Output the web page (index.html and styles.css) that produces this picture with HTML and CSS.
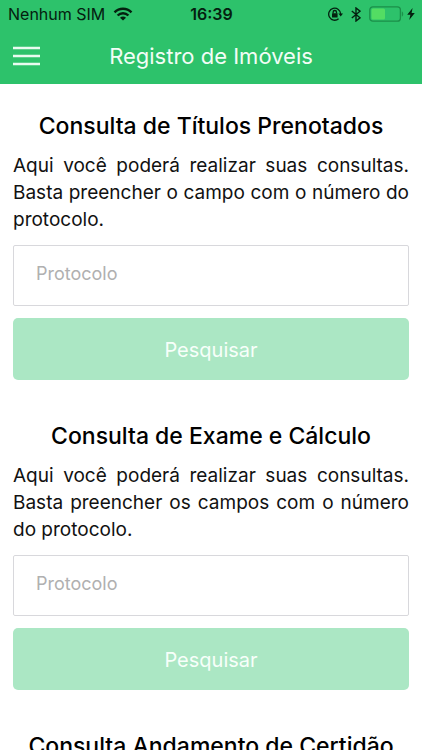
FILE: index.html
```html
<!DOCTYPE html>
<html lang="pt-BR">
<head>
  <meta charset="UTF-8">
  <meta name="viewport" content="width=device-width, initial-scale=1">
  <title>Registro de Imóveis</title>
  <link rel="stylesheet" href="styles.css">
</head>
<body>

  <header>
    <div class="status">
      <div class="carrier">
        <span>Nenhum SIM</span>
        <svg width="20" height="14" viewBox="0 0 20 14" fill="none" stroke="#04200f" stroke-width="2.4">
          <path d="M1.5 5.3C6.3 0.5 13.7 0.5 18.5 5.3"/>
          <path d="M4.6 8.5C7.6 5.5 12.4 5.5 15.4 8.5"/>
          <path d="M10 13.6L7 10.8C8.7 9.2 11.3 9.2 13 10.8Z" fill="#04200f" stroke="none"/>
        </svg>
      </div>
      <span class="clock">16:39</span>
      <div class="indicators">
        <svg width="15" height="14" viewBox="0 0 15 14" fill="none" stroke="#04200f" stroke-width="1.3">
          <path d="M10.6 11.8A6 6 0 1 1 12.7 7"/>
          <path d="M10.4 6.6H15L12.7 9.6Z" fill="#04200f" stroke="none"/>
          <rect x="4" y="6.2" width="5.6" height="4.2" rx="0.5" fill="#04200f" stroke="none"/>
          <path d="M5.1 6.5V5.2A1.7 1.7 0 0 1 8.5 5.2V6.5"/>
        </svg>
        <svg width="10" height="15" viewBox="0 0 10 15" fill="none" stroke="#04200f" stroke-width="1.4">
          <path d="M0.8 4L9 10.8L5 14V1L9 4.2L0.8 11"/>
        </svg>
        <div class="battery">
          <svg width="35" height="16" viewBox="0 0 35 16">
            <rect x="0.8" y="0.8" width="30.6" height="14.4" rx="3" fill="none" stroke="#1b8f49" stroke-width="1.3"/>
            <rect x="2.5" y="2.5" width="13.5" height="11" rx="1.5" fill="#53dd63"/>
            <path d="M32.8 5.5C34.7 6 34.7 10 32.8 10.5Z" fill="#1b8f49"/>
          </svg>
          <svg width="8" height="12" viewBox="0 0 8 12" fill="#04200f">
            <path d="M5.6 0L0.2 6.8H3.4L2.2 12L7.8 5H4.6Z"/>
          </svg>
        </div>
      </div>
    </div>
    <div class="toolbar">
      <button class="menu" type="button" aria-label="Menu">
        <svg width="27" height="20" viewBox="0 0 27 20" stroke="#e9fbf0" stroke-width="2.4">
          <path d="M0 2H27M0 10H27M0 18H27"/>
        </svg>
      </button>
      <h1>Registro de Imóveis</h1>
    </div>
  </header>

  <main>
    <form class="consulta">
      <h2>Consulta de Títulos Prenotados</h2>
      <p>Aqui você poderá realizar suas consultas. Basta preencher o campo com o número do protocolo.</p>
      <input type="text" id="titulo" placeholder="Protocolo" aria-label="Protocolo">
      <button class="pesquisar" type="submit" disabled>Pesquisar</button>
    </form>

    <form class="consulta">
      <h2>Consulta de Exame e Cálculo</h2>
      <p>Aqui você poderá realizar suas consultas. Basta preencher os campos com o número do protocolo.</p>
      <input type="text" id="exame" placeholder="Protocolo" aria-label="Protocolo">
      <button class="pesquisar" type="submit" disabled>Pesquisar</button>
    </form>

    <form class="consulta">
      <h2>Consulta Andamento de Certidão</h2>
    </form>
  </main>

</body>
</html>
```

FILE: styles.css
```css
* {
  box-sizing: border-box;
}
body {
  display: flex;
  flex-direction: column;
  height: 100vh;
  margin: 0;
  font-family: Inter, "Liberation Sans", sans-serif;
  background: #fff;
  color: #111;
}
header {
  flex: none;
  background: #2dc26b;
}
svg {
  display: block;
}
.status {
  display: grid;
  grid-template-columns: 1fr auto 1fr;
  align-items: center;
  height: 28px;
  padding: 0 7px 0 8px;
  font-size: 16px;
  color: #04200f;
}
.carrier, .indicators {
  display: flex;
  align-items: center;
  gap: 8px;
}
.indicators {
  justify-content: flex-end;
}
.battery {
  display: flex;
  align-items: center;
  gap: 3px;
}
.clock {
  font-weight: 600;
}
.toolbar {
  display: grid;
  grid-template-columns: 27px 1fr 27px;
  align-items: center;
  height: 56px;
  padding: 0 13px;
}
.menu {
  padding: 0;
  border: none;
  background: none;
  cursor: pointer;
}
h1 {
  margin: 0;
  font-size: 22px;
  font-weight: 400;
  text-align: center;
  color: #f2fdf6;
}
main {
  flex: 1;
  min-height: 0;
  overflow-y: auto;
  scrollbar-width: none;
  padding: 27px 13px;
}
.consulta {
  margin-bottom: 41px;
}
h2 {
  margin: 0 0 11px;
  font-size: 23px;
  font-weight: 500;
  line-height: 30px;
  text-align: center;
  color: #000;
}
p {
  margin: 0 0 12px;
  font-size: 19px;
  line-height: 27px;
  text-align: justify;
}
input {
  display: block;
  width: 100%;
  height: 61px;
  margin-bottom: 12px;
  padding: 0 22px 4px;
  border: 1px solid #d8d8dc;
  border-radius: 2px;
  font: inherit;
  font-size: 18px;
}
input::placeholder {
  color: #b0b0b0;
}
.pesquisar {
  display: block;
  width: 100%;
  height: 62px;
  padding: 2px 0 0;
  border: none;
  border-radius: 5px;
  background: #abe7c4;
  font: inherit;
  font-size: 20px;
  color: #f7fffa;
}
```
